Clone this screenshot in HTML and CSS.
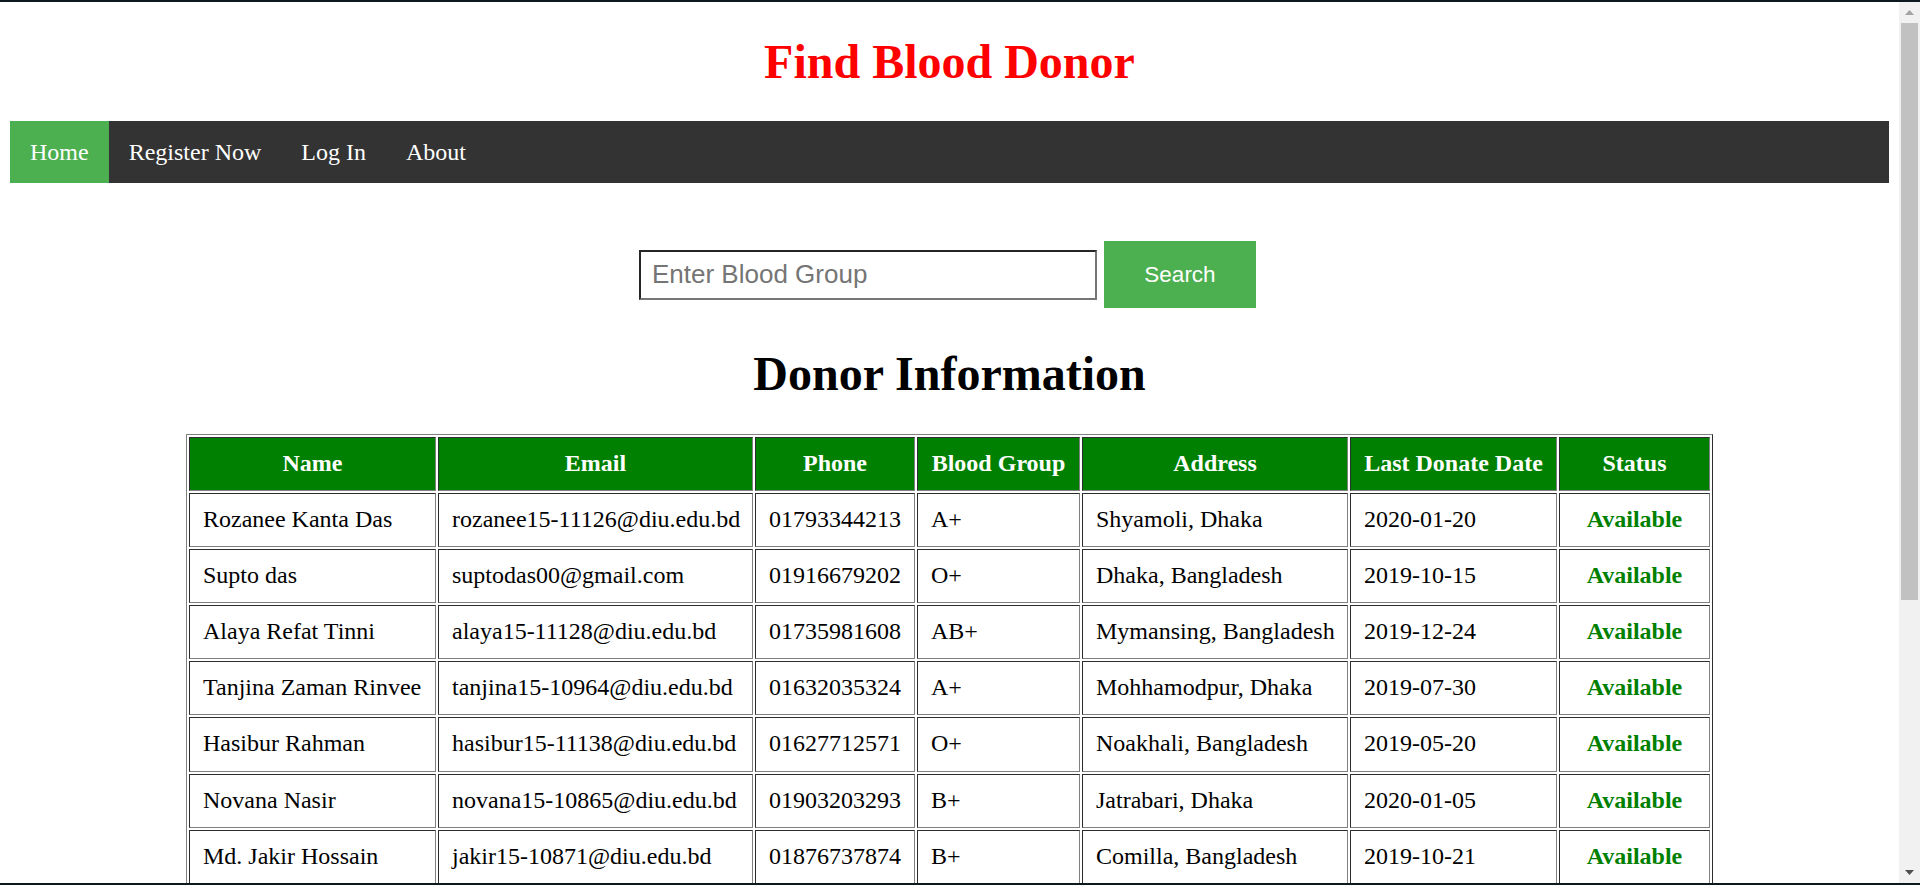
FILE: index.html
```html
<!DOCTYPE html>
<html lang="en">
<head>
<meta charset="utf-8">
<title>Find Blood Donor</title>
<link rel="stylesheet" href="styles.css">
</head>
<body>
<div class="page">
  <h1 class="site-title">Find Blood Donor</h1>
  <nav class="topnav">
    <a class="nav-link active" href="#">Home</a>
    <a class="nav-link" href="#">Register Now</a>
    <a class="nav-link" href="#">Log In</a>
    <a class="nav-link" href="#">About</a>
  </nav>
  <form class="search">
    <input class="search-input" type="text" placeholder="Enter Blood Group">
    <button class="search-btn" type="button">Search</button>
  </form>
  <h2 class="section-title">Donor Information</h2>
  <table class="donors">
    <thead>
      <tr>
        <th class="c-name">Name</th>
        <th class="c-email">Email</th>
        <th class="c-phone">Phone</th>
        <th class="c-group">Blood Group</th>
        <th class="c-addr">Address</th>
        <th class="c-date">Last Donate Date</th>
        <th class="c-status">Status</th>
      </tr>
    </thead>
    <tbody>
      <tr><td>Rozanee Kanta Das</td><td>rozanee15-11126@diu.edu.bd</td><td>01793344213</td><td>A+</td><td>Shyamoli, Dhaka</td><td>2020-01-20</td><td class="status">Available</td></tr>
      <tr><td>Supto das</td><td>suptodas00@gmail.com</td><td>01916679202</td><td>O+</td><td>Dhaka, Bangladesh</td><td>2019-10-15</td><td class="status">Available</td></tr>
      <tr><td>Alaya Refat Tinni</td><td>alaya15-11128@diu.edu.bd</td><td>01735981608</td><td>AB+</td><td>Mymansing, Bangladesh</td><td>2019-12-24</td><td class="status">Available</td></tr>
      <tr><td>Tanjina Zaman Rinvee</td><td>tanjina15-10964@diu.edu.bd</td><td>01632035324</td><td>A+</td><td>Mohhamodpur, Dhaka</td><td>2019-07-30</td><td class="status">Available</td></tr>
      <tr><td>Hasibur Rahman</td><td>hasibur15-11138@diu.edu.bd</td><td>01627712571</td><td>O+</td><td>Noakhali, Bangladesh</td><td>2019-05-20</td><td class="status">Available</td></tr>
      <tr><td>Novana Nasir</td><td>novana15-10865@diu.edu.bd</td><td>01903203293</td><td>B+</td><td>Jatrabari, Dhaka</td><td>2020-01-05</td><td class="status">Available</td></tr>
      <tr><td>Md. Jakir Hossain</td><td>jakir15-10871@diu.edu.bd</td><td>01876737874</td><td>B+</td><td>Comilla, Bangladesh</td><td>2019-10-21</td><td class="status">Available</td></tr>
    </tbody>
  </table>
</div>
<div class="scrollbar" aria-hidden="true">
  <div class="sb-btn">
    <svg width="9" height="5" viewBox="0 0 9 5"><path d="M0 5 L4.5 0 L9 5Z" fill="#a3a3a3"/></svg>
  </div>
  <div class="sb-track"><div class="sb-thumb"></div></div>
  <div class="sb-btn">
    <svg width="9" height="5" viewBox="0 0 9 5"><path d="M0 0 L4.5 5 L9 0Z" fill="#505050"/></svg>
  </div>
</div>
</body>
</html>
```
FILE: styles.css
```css
html {
  height: 885px;
  overflow: hidden;
  background: #0c1a20;
}

body {
  box-sizing: border-box;
  margin: 2px 0 0;
  height: 881px;
  padding-right: 21px;
  overflow: hidden;
  background: #ffffff;
  font-family: "Liberation Serif", "Times New Roman", serif;
  color: #000;
}

.scrollbar {
  position: fixed;
  top: 2px;
  right: 0;
  bottom: 2px;
  width: 21px;
  display: flex;
  flex-direction: column;
  background: #f1f1f1;
}

.sb-btn {
  height: 21px;
  display: flex;
  align-items: center;
  justify-content: center;
}

.sb-btn svg {
  display: block;
}

.sb-track {
  flex: 1;
}

.sb-thumb {
  height: 577px;
  margin: 0 2px;
  background: #c1c1c1;
}

.page {
  padding: 0 10px;
}

.site-title {
  margin: 32px 0;
  font-size: 48px;
  line-height: 55px;
  font-weight: bold;
  color: #ff0000;
  text-align: center;
}

.topnav {
  display: flex;
  background: #333333;
}

.nav-link {
  display: block;
  padding: 17px 20px;
  font-size: 24px;
  line-height: 28px;
  color: #ffffff;
  text-decoration: none;
}

.nav-link.active {
  background: #4caf50;
}

.search {
  display: flex;
  justify-content: center;
  align-items: center;
  gap: 7px;
  margin: 58px 0 0;
  padding-right: 4px;
}

.search-input {
  box-sizing: border-box;
  width: 458px;
  height: 50px;
  margin: 0;
  padding: 0 11px;
  border-style: solid;
  border-width: 2px;
  border-color: #262626 #767676 #767676 #262626;
  font-family: "Liberation Sans", Arial, sans-serif;
  font-size: 26px;
  color: #000;
  background: #fff;
  outline: none;
}

.search-input::placeholder {
  color: #757575;
}

.search-btn {
  box-sizing: border-box;
  width: 152px;
  height: 67px;
  margin: 0;
  padding: 0;
  border: none;
  background: #4caf50;
  color: #ffffff;
  font-family: "Liberation Sans", Arial, sans-serif;
  font-size: 22.5px;
}

.section-title {
  margin: 38px 0 33px;
  font-size: 48px;
  line-height: 55px;
  font-weight: bold;
  text-align: center;
}

.donors {
  margin: 0 auto;
  width: 1527px;
  table-layout: fixed;
  border-collapse: separate;
  border-spacing: 2px;
  border: 1px outset gray;
}

.donors th,
.donors td {
  box-sizing: border-box;
  border: 1px inset gray;
  padding: 11px 13px 13px;
  font-size: 24px;
  line-height: 28.1px;
  white-space: nowrap;
}

.donors th {
  background: #008000;
  color: #ffffff;
  font-weight: bold;
  text-align: center;
}

.donors td {
  text-align: left;
}

.donors td.status {
  text-align: center;
  font-weight: bold;
  color: #008000;
}

.c-name { width: 247px; }
.c-email { width: 315px; }
.c-phone { width: 160px; }
.c-group { width: 163px; }
.c-addr { width: 266px; }
.c-date { width: 207px; }
.c-status { width: 151px; }
```
